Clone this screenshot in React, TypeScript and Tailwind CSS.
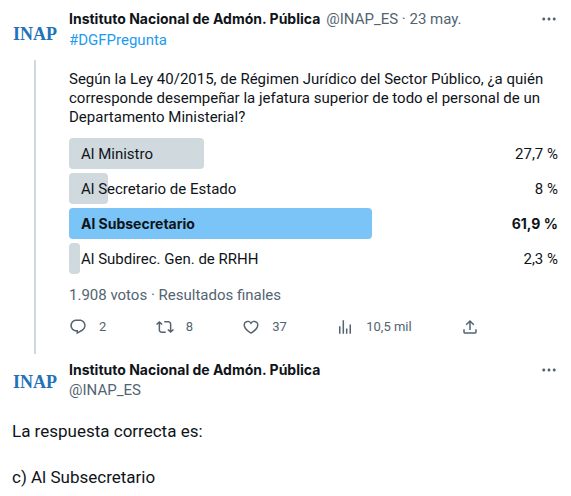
import React from 'react';

interface PollOption {
  label: string;
  percent: number;
  display: string;
  winner?: boolean;
}

const options: PollOption[] = [
  { label: 'Al Ministro', percent: 27.7, display: '27,7 %' },
  { label: 'Al Secretario de Estado', percent: 8, display: '8 %' },
  { label: 'Al Subsecretario', percent: 61.9, display: '61,9 %', winner: true },
  { label: 'Al Subdirec. Gen. de RRHH', percent: 2.3, display: '2,3 %' },
];

const icons = {
  reply:
    'M1.751 10c0-4.42 3.584-8 8.005-8h4.366c4.49 0 8.129 3.64 8.129 8.13 0 2.96-1.607 5.68-4.196 7.11l-8.054 4.46v-3.69h-.067c-4.49.1-8.183-3.51-8.183-8.01zm8.005-6c-3.317 0-6.005 2.69-6.005 6 0 3.37 2.77 6.08 6.138 6.01l.351-.01h1.761v2.3l5.087-2.81c1.951-1.08 3.163-3.13 3.163-5.36 0-3.39-2.744-6.13-6.129-6.13H9.756z',
  retweet:
    'M4.5 3.88l4.432 4.14-1.364 1.46L5.5 7.55V16c0 1.1.896 2 2 2H13v2H7.5c-2.209 0-4-1.79-4-4V7.55L1.432 9.48.068 8.02 4.5 3.88zM16.5 6H11V4h5.5c2.209 0 4 1.79 4 4v8.45l2.068-1.93 1.364 1.46-4.432 4.14-4.432-4.14 1.364-1.46 2.068 1.93V8c0-1.1-.896-2-2-2z',
  like:
    'M16.697 5.5c-1.222-.06-2.679.51-3.89 2.16l-.805 1.09-.806-1.09C9.984 6.01 8.526 5.44 7.304 5.5c-1.243.07-2.349.78-2.91 1.91-.552 1.12-.633 2.78.479 4.82 1.074 1.97 3.257 4.27 7.129 6.61 3.87-2.34 6.052-4.64 7.126-6.61 1.111-2.04 1.03-3.7.477-4.82-.561-1.13-1.666-1.84-2.908-1.91zm4.187 7.69c-1.351 2.48-4.001 5.12-8.379 7.67l-.503.3-.504-.3c-4.379-2.55-7.029-5.19-8.382-7.67-1.36-2.5-1.41-4.86-.514-6.67.887-1.79 2.647-2.91 4.601-3.01 1.651-.09 3.368.56 4.798 2.01 1.429-1.45 3.146-2.1 4.796-2.01 1.954.1 3.714 1.22 4.601 3.01.896 1.81.846 4.17-.514 6.67z',
  views: 'M8.75 21V3h2v18h-2zM18 21V8.5h2V21h-2zM4 21l.004-10h2L6 21H4zm9.248 0v-7h2v7h-2z',
  share:
    'M12 2.59l5.7 5.7-1.41 1.42L13 6.41V16h-2V6.41l-3.3 3.3-1.41-1.42L12 2.59zM21 15l-.02 3.51c0 1.38-1.12 2.49-2.5 2.49H5.5C4.11 21 3 19.88 3 18.5V15h2v3.5c0 .28.22.5.5.5h12.98c.28 0 .5-.22.5-.5L19 15h2z',
  more:
    'M3 12c0-1.1.9-2 2-2s2 .9 2 2-.9 2-2 2-2-.9-2-2zm9 2c1.1 0 2-.9 2-2s-.9-2-2-2-2 .9-2 2 .9 2 2 2zm7 0c1.1 0 2-.9 2-2s-.9-2-2-2-2 .9-2 2 .9 2 2 2z',
};

const actions: { icon: keyof typeof icons; label: string; count?: string }[] = [
  { icon: 'reply', label: 'Responder', count: '2' },
  { icon: 'retweet', label: 'Retwittear', count: '8' },
  { icon: 'like', label: 'Me gusta', count: '37' },
  { icon: 'views', label: 'Ver', count: '10,5 mil' },
  { icon: 'share', label: 'Compartir' },
];

const Icon: React.FC<{ name: keyof typeof icons }> = ({ name }) => (
  <svg viewBox="0 0 24 24" className="size-[18px] shrink-0 fill-current" aria-hidden="true">
    <path d={icons[name]} />
  </svg>
);

const Avatar: React.FC = () => (
  <a
    href="#inap"
    className="flex size-[46px] shrink-0 items-center justify-center font-['Liberation_Serif',serif] text-lg font-bold text-[#2272b9]"
  >
    INAP
  </a>
);

const AuthorName: React.FC = () => (
  <a href="#inap" className="font-[Inter,sans-serif] text-sm leading-5 font-bold text-[#0f1419]">
    Instituto Nacional de Admón. Pública
  </a>
);

const MoreButton: React.FC = () => (
  <button type="button" aria-label="Más opciones" className="flex h-5 items-center text-[#536471]">
    <Icon name="more" />
  </button>
);

const PollRow: React.FC<{ option: PollOption }> = ({ option }) => (
  <li
    className={`relative flex h-[31px] items-center justify-between ${
      option.winner ? 'font-[Inter,sans-serif] text-sm font-bold' : ''
    }`}
  >
    <div
      className={`absolute inset-y-0 left-0 rounded ${option.winner ? 'bg-[#7ac4f7]' : 'bg-[#cfd9de]'}`}
      style={{ width: `${option.percent}%` }}
    />
    <span className="relative pl-3">{option.label}</span>
    <span className="relative">{option.display}</span>
  </li>
);

const App: React.FC = () => {
  return (
    <main className="bg-white pt-[9px] pr-[13px] pl-3 font-[Roboto,sans-serif] text-[15px] leading-5 text-[#0f1419]">
      <article className="flex gap-[11px]">
        <div className="flex flex-col items-center pt-0.5">
          <Avatar />
          <div className="mt-[3px] w-0.5 grow bg-[#cfd9de]" />
        </div>
        <div className="min-w-0 grow pb-[17px]">
          <div className="flex justify-between">
            <div className="flex flex-wrap gap-x-1.5 text-[#536471]">
              <AuthorName />
              <span>@INAP_ES · 23 may.</span>
            </div>
            <MoreButton />
          </div>
          <div className="mt-px">
            <a href="#DGFPregunta" className="text-[#1d9bf0]">#DGFPregunta</a>
          </div>
          <p className="mt-5 leading-[19px]">
            Según la Ley 40/2015, de Régimen Jurídico del Sector Público, ¿a quién corresponde desempeñar la jefatura
            superior de todo el personal de un Departamento Ministerial?
          </p>
          <ul className="mt-[11px] flex flex-col gap-1">
            {options.map((option) => (
              <PollRow key={option.label} option={option} />
            ))}
          </ul>
          <div className="mt-[11px] text-[#536471]">1.908 votos · Resultados finales</div>
          <div className="mt-3 flex max-w-[410px] justify-between text-[13px] leading-5 text-[#536471]">
            {actions.map((action) => (
              <button key={action.icon} type="button" aria-label={action.label} className="flex items-center gap-3">
                <Icon name={action.icon} />
                {action.count && <span>{action.count}</span>}
              </button>
            ))}
          </div>
        </div>
      </article>

      <article className="pt-[5px]">
        <div className="flex gap-[11px]">
          <Avatar />
          <div className="flex grow justify-between pt-px">
            <div className="flex flex-col">
              <AuthorName />
              <span className="text-[#536471]">@INAP_ES</span>
            </div>
            <MoreButton />
          </div>
        </div>
        <div className="mt-[15px] flex flex-col gap-[23px] text-[17px] leading-[23px]">
          <p>La respuesta correcta es:</p>
          <p>c) Al Subsecretario</p>
        </div>
      </article>
    </main>
  );
};

export default App;
